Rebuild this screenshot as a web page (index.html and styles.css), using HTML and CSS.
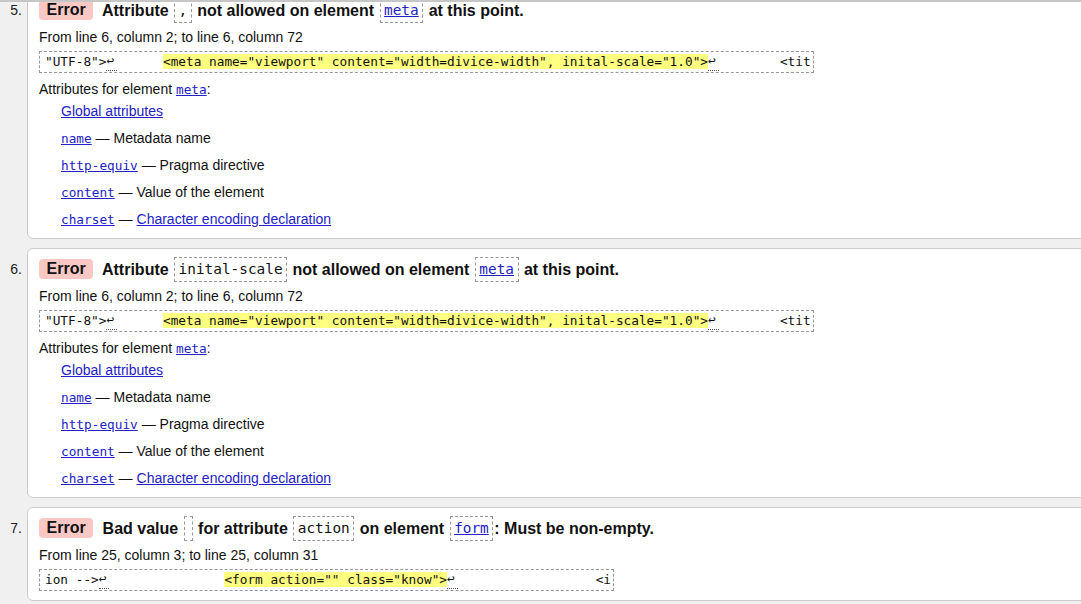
FILE: index.html
```html
<!DOCTYPE html>
<html lang="en">
<head>
<meta charset="utf-8">
<title>Validation messages</title>
<link rel="stylesheet" href="styles.css">
</head>
<body>
<div class="topline"></div>
<ol class="messages">
  <li class="msg">
    <span class="num">5.</span>
    <div class="card">
      <p class="head"><strong class="badge">Error</strong> Attribute <code class="box">,</code> not allowed on element <code class="box"><a href="#">meta</a></code> at this point.</p>
      <p class="loc">From line 6, column 2; to line 6, column 72</p>
      <div class="extract"><code>"UTF-8"&gt;<b class="lf">↩</b>      <mark>&lt;meta name="viewport" content="width=divice-width", inital-scale="1.0"&gt;</mark><b class="lf">↩</b>        &lt;tit</code></div>
      <p class="attrs-title">Attributes for element <a class="c" href="#">meta</a>:</p>
      <ul class="attrs">
        <li><a href="#">Global attributes</a></li>
        <li><a class="c" href="#">name</a> — Metadata name</li>
        <li><a class="c" href="#">http-equiv</a> — Pragma directive</li>
        <li><a class="c" href="#">content</a> — Value of the element</li>
        <li><a class="c" href="#">charset</a> — <a href="#">Character encoding declaration</a></li>
      </ul>
    </div>
  </li>
  <li class="msg">
    <span class="num">6.</span>
    <div class="card">
      <p class="head"><strong class="badge">Error</strong> Attribute <code class="box">inital-scale</code> not allowed on element <code class="box"><a href="#">meta</a></code> at this point.</p>
      <p class="loc">From line 6, column 2; to line 6, column 72</p>
      <div class="extract"><code>"UTF-8"&gt;<b class="lf">↩</b>      <mark>&lt;meta name="viewport" content="width=divice-width", inital-scale="1.0"&gt;</mark><b class="lf">↩</b>        &lt;tit</code></div>
      <p class="attrs-title">Attributes for element <a class="c" href="#">meta</a>:</p>
      <ul class="attrs">
        <li><a href="#">Global attributes</a></li>
        <li><a class="c" href="#">name</a> — Metadata name</li>
        <li><a class="c" href="#">http-equiv</a> — Pragma directive</li>
        <li><a class="c" href="#">content</a> — Value of the element</li>
        <li><a class="c" href="#">charset</a> — <a href="#">Character encoding declaration</a></li>
      </ul>
    </div>
  </li>
  <li class="msg">
    <span class="num">7.</span>
    <div class="card">
      <p class="head"><strong class="badge">Error</strong> Bad value <code class="box empty"></code> for attribute <code class="box">action</code> on element <code class="box"><a href="#">form</a></code>: Must be non-empty.</p>
      <p class="loc">From line 25, column 3; to line 25, column 31</p>
      <div class="extract"><code>ion --&gt;<b class="lf">↩</b>               <mark>&lt;form action="" class="know"&gt;</mark><b class="lf">↩</b>                  &lt;i</code></div>
    </div>
  </li>
</ol>
</body>
</html>
```
FILE: styles.css
```css
html, body {
  margin: 0;
  padding: 0;
}

body {
  width: 1081px;
  height: 604px;
  overflow: hidden;
  background: #f0f0f0;
  color: #111;
  font-family: "Liberation Sans", Arial, sans-serif;
  font-size: 14px;
}

.topline {
  position: fixed;
  top: 0;
  left: 0;
  right: 0;
  height: 2px;
  background: #c6c6c6;
  z-index: 5;
}

.messages {
  list-style: none;
  margin: -11px 0 0;
  padding: 0;
  display: flex;
  flex-direction: column;
  gap: 9px;
}

.msg {
  display: flex;
  align-items: flex-start;
}

.num {
  flex: none;
  width: 22px;
  margin-right: 5px;
  padding-top: 9px;
  line-height: 25px;
  text-align: right;
  color: #222;
}

.card {
  flex: none;
  width: 1080px;
  background: #fff;
  border: 1px solid #ccc;
  border-radius: 6px;
  padding: 8px 11px 9px;
}

.head {
  margin: 0;
  height: 25px;
  font-size: 16px;
  font-weight: bold;
  line-height: 25px;
  white-space: nowrap;
}

.badge {
  display: inline-block;
  background: #f9c8c4;
  border-radius: 4px;
  padding: 0 7.5px;
  line-height: 20px;
  vertical-align: top;
  margin: 2px 5px 0 0;
}

.box {
  display: inline-block;
  height: 25px;
  box-sizing: border-box;
  font-family: "DejaVu Sans Mono", monospace;
  font-weight: normal;
  font-size: 14.4px;
  line-height: 23px;
  border: 1px dashed #999;
  padding: 0 3.5px;
  margin: 0 1px;
  vertical-align: top;
}

.loc {
  margin: 5px 0 0;
  height: 18px;
  line-height: 18px;
}

.extract {
  display: flex;
  margin-top: 5px;
}

.extract code {
  border: 1px dashed #999;
  padding: 0 2px 0 5px;
  height: 20px;
  line-height: 20px;
  white-space: pre;
  font-family: "DejaVu Sans Mono", monospace;
  font-size: 12.75px;
  color: #111;
}

.extract mark {
  background: #ffff80;
  color: inherit;
}

.lf {
  display: inline-block;
  width: 10.5px;
  line-height: 18px;
  font-weight: normal;
  border-bottom: 1px dotted #555;
  vertical-align: top;
}

.attrs-title {
  margin: 7px 0 0;
  height: 18px;
  line-height: 18px;
}

.attrs {
  list-style: none;
  margin: 4px 0 1px;
  padding: 0 0 0 22px;
}

.attrs li {
  height: 18px;
  line-height: 18px;
}

.attrs li + li {
  margin-top: 9px;
}

a {
  color: #2222c4;
  text-decoration: underline;
}

.c {
  font-family: "DejaVu Sans Mono", monospace;
  font-size: 12.75px;
  line-height: 1;
}
```
